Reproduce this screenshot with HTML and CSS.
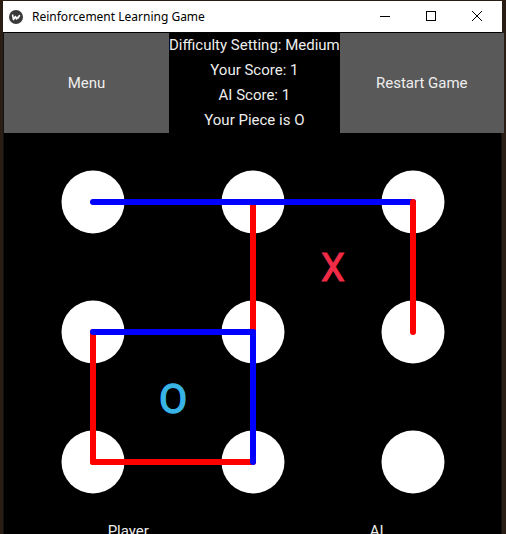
FILE: index.html
```html
<!DOCTYPE html>
<html>
<head>
<meta charset="utf-8">
<link rel="stylesheet" href="styles.css">
</head>
<body>
<div class="window">
  <div class="titlebar">
    <svg class="app-icon" width="16" height="16" viewBox="0 0 16 16">
      <circle cx="8" cy="8" r="7" fill="#3a3a3a"/>
      <path d="M4.5 5.5 L5.5 10.5 L7.5 7.5 L8.5 10 L11.5 6.5 L10 9.5" fill="none" stroke="#fff" stroke-width="1.6" stroke-linejoin="round"/>
    </svg>
    <span class="title">Reinforcement Learning Game</span>
    <div class="controls">
      <svg class="ctl" width="46" height="31" viewBox="0 0 46 31"><line x1="18" y1="15.5" x2="28" y2="15.5" stroke="#000" stroke-width="1"/></svg>
      <svg class="ctl" width="46" height="31" viewBox="0 0 46 31"><rect x="18.5" y="10.5" width="9" height="9" fill="none" stroke="#000" stroke-width="1"/></svg>
      <svg class="ctl" width="46" height="31" viewBox="0 0 46 31"><path d="M18 10 L28 20 M28 10 L18 20" stroke="#000" stroke-width="1"/></svg>
    </div>
  </div>
  <div class="content">
    <div class="header">
      <div class="btn">Menu</div>
      <div class="info">
        <div>Difficulty Setting: Medium</div>
        <div>Your Score: 1</div>
        <div>AI Score: 1</div>
        <div>Your Piece is O</div>
      </div>
      <div class="btn">Restart Game</div>
    </div>
    <svg class="board" width="497" height="392" viewBox="0 0 497 392">
      <g fill="#fff">
        <circle cx="89" cy="72" r="31.5"/>
        <circle cx="249" cy="72" r="31.5"/>
        <circle cx="409" cy="72" r="31.5"/>
        <circle cx="89" cy="202" r="31.5"/>
        <circle cx="249" cy="202" r="31.5"/>
        <circle cx="409" cy="202" r="31.5"/>
        <circle cx="89" cy="332" r="31.5"/>
        <circle cx="249" cy="332" r="31.5"/>
        <circle cx="409" cy="332" r="31.5"/>
      </g>
      <g stroke-width="6" stroke-linecap="round" fill="none">
        <line x1="249" y1="72" x2="249" y2="202" stroke="#ff0000"/>
        <line x1="89" y1="202" x2="89" y2="332" stroke="#ff0000"/>
        <line x1="89" y1="332" x2="249" y2="332" stroke="#ff0000"/>
        <line x1="89" y1="72" x2="409" y2="72" stroke="#0000ff"/>
        <line x1="409" y1="72" x2="409" y2="202" stroke="#ff0000"/>
        <line x1="89" y1="202" x2="249" y2="202" stroke="#0000ff"/>
        <line x1="249" y1="202" x2="249" y2="332" stroke="#0000ff"/>
      </g>
      <text x="329" y="151" class="mark mark-x">X</text>
      <text x="169" y="283" class="mark mark-o">O</text>
    </svg>
    <div class="footer">
      <div>Player</div>
      <div>AI</div>
    </div>
  </div>
</div>
</body>
</html>
```

FILE: styles.css
```css
html, body {
  margin: 0;
  padding: 0;
}
body {
  width: 506px;
  height: 534px;
  overflow: hidden;
  background: #2a1d14;
  font-family: Roboto, "Noto Sans", sans-serif;
}
.window {
  margin: 1px 0 0 3px;
  width: 499px;
  height: 533px;
  background: #111;
  display: flex;
  flex-direction: column;
}
.titlebar {
  height: 31px;
  background: #fff;
  display: flex;
  align-items: center;
  flex-shrink: 0;
}
.app-icon {
  margin-left: 5px;
  margin-right: 8px;
}
.title {
  font-family: "Noto Sans", "Open Sans", sans-serif;
  font-size: 12px;
  color: #000;
  flex: 1;
}
.controls {
  display: flex;
  margin-right: 2px;
}
.ctl {
  display: block;
}
.content {
  margin-left: 1px;
  width: 497px;
  flex: 1;
  background: #000;
  display: flex;
  flex-direction: column;
}
.header {
  margin-top: 1px;
  height: 97px;
  display: grid;
  grid-template-columns: 165px 1fr 164px;
  color: #eeeeee;
  font-size: 15px;
}
.btn {
  background: #595959;
  display: flex;
  align-items: center;
  justify-content: center;
}
.info {
  display: flex;
  flex-direction: column;
  align-items: center;
  line-height: 25px;
  white-space: nowrap;
}
.board {
  display: block;
  flex-shrink: 0;
}
.mark {
  font-family: Roboto, sans-serif;
  text-anchor: middle;
}
.mark-x {
  fill: #f02b47;
  stroke: #f02b47;
  stroke-width: 1px;
  font-size: 38px;
}
.mark-o {
  fill: #38b4e6;
  stroke: #38b4e6;
  stroke-width: 1.4px;
  font-size: 41px;
}
.footer {
  display: grid;
  grid-template-columns: 1fr 1fr;
  color: #eeeeee;
  font-size: 15px;
  line-height: 18px;
  text-align: center;
}
```
